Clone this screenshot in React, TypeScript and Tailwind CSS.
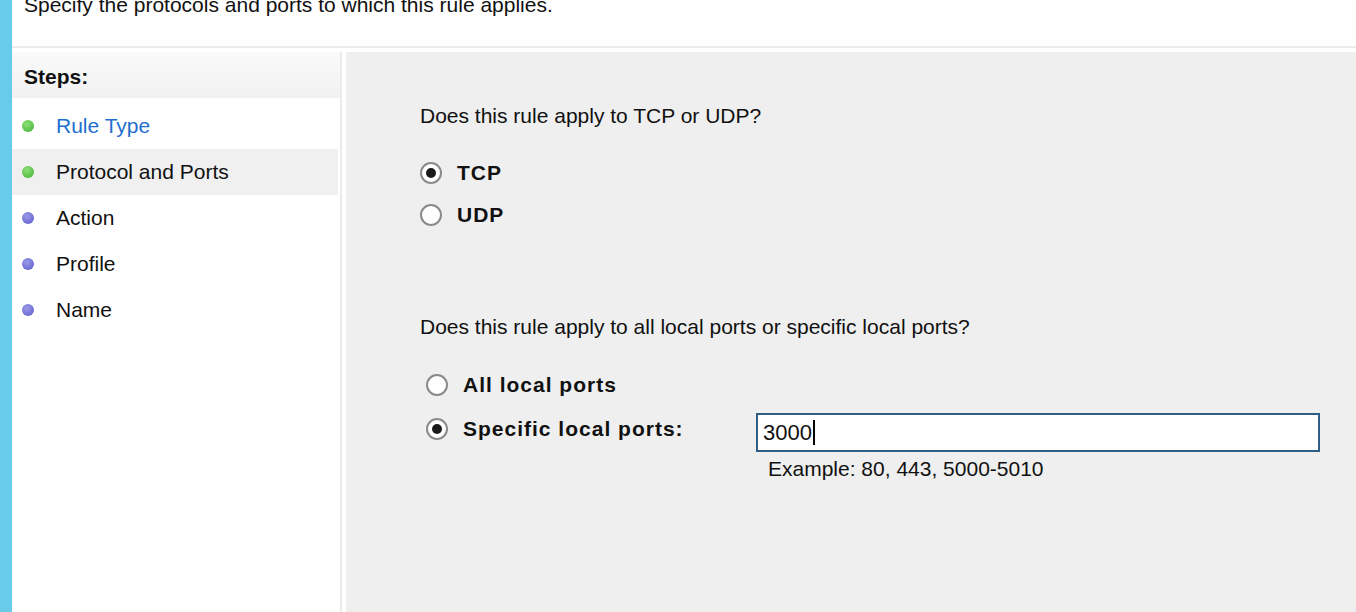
const steps = [
  { name: 'Rule Type', done: true, link: true },
  { name: 'Protocol and Ports', done: true, active: true },
  { name: 'Action' },
  { name: 'Profile' },
  { name: 'Name' },
];

function Radio({ checked }: { checked?: boolean }) {
  return (
    <span className="flex h-[22px] w-[22px] shrink-0 items-center justify-center rounded-full border-2 border-[#8a8a8a] bg-white">
      {checked && <span className="h-[10px] w-[10px] rounded-full bg-[#1a1a1a]" />}
    </span>
  );
}

function Bullet({ done }: { done?: boolean }) {
  return (
    <span
      className={
        done
          ? 'h-[12px] w-[12px] shrink-0 rounded-full bg-[radial-gradient(circle_at_40%_35%,#8ee07a,#3fae2e)]'
          : 'h-[12px] w-[12px] shrink-0 rounded-full bg-[radial-gradient(circle_at_40%_35%,#9a9ae8,#5a5acb)]'
      }
    />
  );
}

export default function App() {
  return (
    <div
      className="flex h-[612px] w-[1356px] overflow-hidden bg-white text-[21px] text-[#111]"
      style={{ fontFamily: '"Liberation Sans", Arial, sans-serif' }}
    >
      <div className="w-[12px] shrink-0 bg-[#68cbe9]" />
      <div className="flex min-w-0 flex-1 flex-col">
        <div className="h-[46px] shrink-0 overflow-hidden px-[12px]">
          <p className="-mt-[7px] leading-[24px]">Specify the protocols and ports to which this rule applies.</p>
        </div>
        <div className="h-[2px] shrink-0 bg-[#ececec]" />
        <div className="flex flex-1 pt-[4px]">
          <div className="flex w-[330px] shrink-0 flex-col border-r-2 border-[#ebebeb] bg-white">
            <div className="flex h-[46px] items-center bg-gradient-to-b from-[#fafafa] to-[#f1f1f1] px-[12px] pt-[4px] font-bold">
              Steps:
            </div>
            <div className="flex flex-col pt-[5px]">
              {steps.map((s) => (
                <div
                  key={s.name}
                  className={`flex h-[46px] items-center gap-[22px] pl-[10px] ${s.active ? 'mr-[2px] bg-[#f0f0f0]' : ''}`}
                >
                  <Bullet done={s.done} />
                  <span className={s.link ? 'text-[#1e6fd0]' : ''}>{s.name}</span>
                </div>
              ))}
            </div>
          </div>
          <div className="w-[4px] shrink-0 bg-white" />
          <div className="flex-1 bg-[#efefef] pl-[74px] pt-[52px]">
            <p className="leading-[24px]">Does this rule apply to TCP or UDP?</p>
            <div className="mt-[34px] flex flex-col gap-[20px]">
              <label className="flex items-center gap-[15px] font-bold tracking-[1px]">
                <Radio checked />
                <span className="leading-[22px]">TCP</span>
              </label>
              <label className="flex items-center gap-[15px] font-bold tracking-[1px]">
                <Radio />
                <span className="leading-[22px]">UDP</span>
              </label>
            </div>
            <p className="mt-[89px] leading-[24px]">Does this rule apply to all local ports or specific local ports?</p>
            <div className="mt-[35px] pl-[6px]">
              <label className="flex items-center gap-[15px] font-bold tracking-[1px]">
                <Radio />
                <span className="leading-[22px]">All local ports</span>
              </label>
              <div className="mt-[11px] flex items-start">
                <label className="flex w-[330px] items-center gap-[15px] pt-[11px] font-bold tracking-[1px]">
                  <Radio checked />
                  <span className="leading-[22px]">Specific local ports:</span>
                </label>
                <div className="mt-[6px] flex flex-col">
                  <div className="flex h-[39px] w-[564px] items-center border-2 border-[#2f5f87] bg-white pl-[5px] text-[22px]">
                    3000<span className="ml-[1px] h-[25px] w-[2px] bg-black" />
                  </div>
                  <p className="mt-[5px] pl-[12px] leading-[24px]">Example: 80, 443, 5000-5010</p>
                </div>
              </div>
            </div>
          </div>
        </div>
      </div>
    </div>
  );
}
